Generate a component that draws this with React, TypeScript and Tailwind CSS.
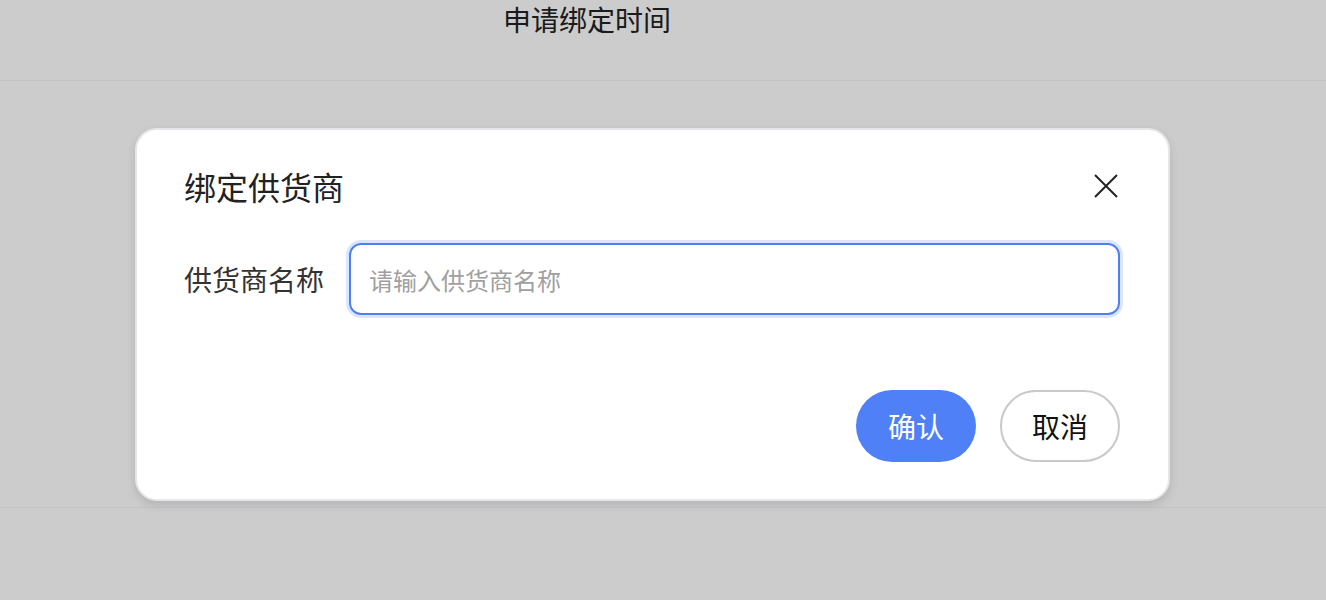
const font = { fontFamily: '"Noto Sans CJK SC", "Noto Sans", sans-serif' };

const App = () => {
  return (
    <div className="relative w-full h-[600px] bg-white overflow-hidden" style={font}>
      {/* page behind the modal */}
      <div className="flex h-[81px] border-b border-[#f4f4f4]">
        <div className="w-[424px]" />
        <div className="w-[326px] -mt-[2px] text-center text-[28px] leading-[42px] text-[#222]">申请绑定时间</div>
      </div>
      <div className="h-[427px] border-b border-[#f4f4f4]" />

      {/* overlay */}
      <div className="absolute inset-0 bg-black/20">
        <div className="absolute left-[135px] top-[128px] w-[1035px] rounded-[22px] border-2 border-[#e6e6ea] bg-white pl-[47px] pr-[48px] pt-[32px] pb-[37px] shadow-[0_4px_10px_rgba(0,0,0,0.12)]">
          <div className="flex items-center justify-between h-[48px]">
            <h2 className="text-[32px] leading-[48px] text-[#222]">绑定供货商</h2>
            <button className="text-[#222] mr-[2px]">
              <svg width="24" height="24" viewBox="0 0 24 24" fill="none" stroke="currentColor" strokeWidth={2}>
                <path d="M1 1L23 23M23 1L1 23" />
              </svg>
            </button>
          </div>

          <div className="mt-[33px] flex items-center gap-[25px]">
            <label className="text-[28px] leading-[40px] text-[#333] whitespace-nowrap">供货商名称</label>
            <input
              className="flex-1 h-[72px] rounded-[12px] border-2 border-[#4f7ff5] px-[18px] text-[24px] text-[#333] placeholder:text-[#a0a0a0] outline-none ring-[3px] ring-[#dbe5fd]"
              placeholder="请输入供货商名称"
            />
          </div>

          <div className="mt-[75px] flex justify-end gap-[24px]">
            <button className="w-[120px] h-[72px] rounded-full bg-[#4f80f7] text-white text-[28px]">确认</button>
            <button className="w-[120px] h-[72px] rounded-full border-2 border-[#c8c8cd] bg-white text-[#111] text-[28px]">取消</button>
          </div>
        </div>
      </div>
    </div>
  );
};

export default App;
